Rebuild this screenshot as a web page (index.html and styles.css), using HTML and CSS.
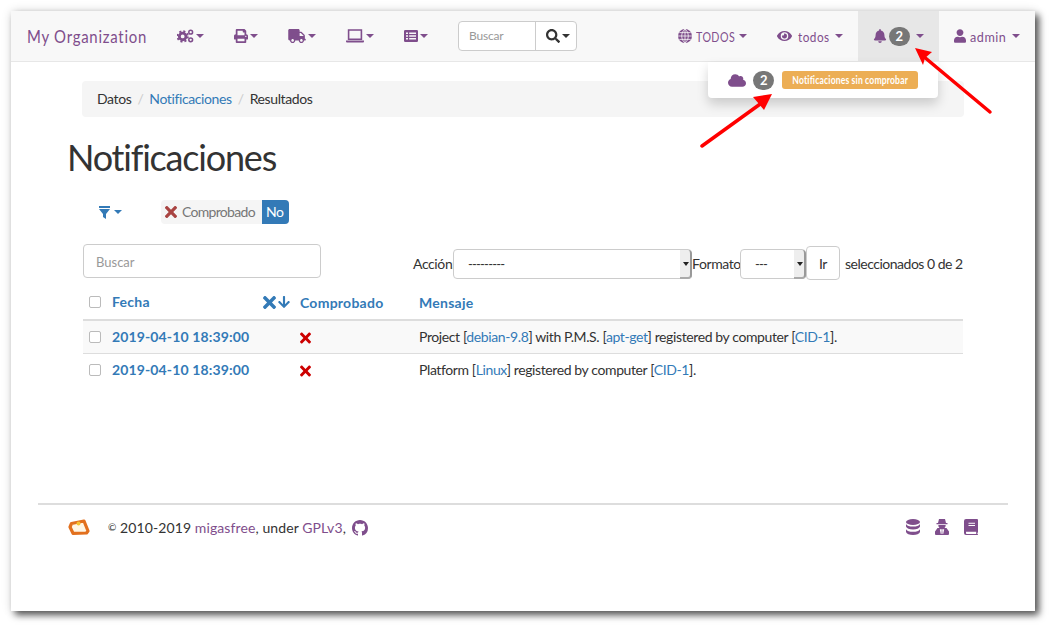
FILE: index.html
```html
<!doctype html>
<html lang="en">
<head>
  <meta charset="utf-8">
  <title>Notificaciones</title>
  <link rel="stylesheet" href="styles.css">
</head>
<body>

<svg class="defs" width="0" height="0">
  <symbol id="i-bell" viewBox="0 0 448 512"><path d="M224 512c35.32 0 63.97-28.65 63.97-64H160.03c0 35.35 28.65 64 63.97 64zm215.39-149.71c-19.32-20.76-55.47-51.99-55.47-154.29 0-77.7-54.48-139.9-127.94-155.16V32c0-17.67-14.32-32-31.98-32s-31.98 14.33-31.98 32v20.84C118.56 68.1 64.08 130.3 64.08 208c0 102.3-36.15 133.53-55.47 154.29-6 6.45-8.66 14.16-8.61 21.71.11 16.4 12.98 32 32.1 32h383.8c19.12 0 32-15.6 32.1-32 .05-7.55-2.61-15.27-8.61-21.71z"/></symbol>
  <symbol id="i-user" viewBox="0 0 448 512"><path d="M224 256c70.7 0 128-57.3 128-128S294.7 0 224 0 96 57.3 96 128s57.3 128 128 128zm89.6 32h-16.7c-22.2 10.2-46.9 16-72.9 16s-50.6-5.8-72.9-16h-16.7C60.2 288 0 348.2 0 422.4V464c0 26.5 21.5 48 48 48h352c26.5 0 48-21.5 48-48v-41.6c0-74.2-60.2-134.4-134.4-134.4z"/></symbol>
  <symbol id="i-cloud" viewBox="0 0 640 512"><path d="M537.6 226.6c4.1-10.7 6.4-22.4 6.4-34.6 0-53-43-96-96-96-19.7 0-38.1 6-53.3 16.2C367 64.2 315.3 32 256 32c-88.4 0-160 71.6-160 160 0 2.7.1 5.4.2 8.1C40.2 219.8 0 273.2 0 336c0 79.5 64.5 144 144 144h368c70.7 0 128-57.3 128-128 0-61.9-44-113.6-102.4-125.4z"/></symbol>
  <symbol id="i-eye" viewBox="0 0 576 512"><path d="M572.52 241.4C518.29 135.59 410.93 64 288 64S57.68 135.64 3.48 241.41a32.35 32.35 0 0 0 0 29.19C57.71 376.41 165.07 448 288 448s230.32-71.64 284.52-177.41a32.35 32.35 0 0 0 0-29.19zM288 400a144 144 0 1 1 144-144 143.93 143.93 0 0 1-144 144zm0-240a95.31 95.31 0 0 0-25.31 3.79 47.85 47.85 0 0 1-66.9 66.9A95.78 95.78 0 1 0 288 160z"/></symbol>
  <symbol id="i-search" viewBox="0 0 512 512"><path d="M505 442.7L405.3 343c-4.5-4.5-10.6-7-17-7H372c27.6-35.3 44-79.7 44-128C416 93.1 322.9 0 208 0S0 93.1 0 208s93.1 208 208 208c48.3 0 92.7-16.4 128-44v16.3c0 6.4 2.5 12.5 7 17l99.7 99.7c9.4 9.4 24.6 9.4 33.9 0l28.3-28.3c9.4-9.4 9.4-24.6.1-34zM208 336c-70.7 0-128-57.2-128-128 0-70.7 57.2-128 128-128 70.7 0 128 57.2 128 128 0 70.7-57.2 128-128 128z"/></symbol>
  <symbol id="i-times" viewBox="0 0 352 512"><path d="M242.72 256l100.07-100.07c12.28-12.28 12.28-32.19 0-44.48l-22.24-22.24c-12.28-12.28-32.19-12.28-44.48 0L176 189.28 75.93 89.21c-12.28-12.28-32.19-12.28-44.48 0L9.21 111.45c-12.28 12.28-12.28 32.19 0 44.48L109.28 256 9.21 356.07c-12.28 12.28-12.28 32.19 0 44.48l22.24 22.24c12.28 12.28 32.2 12.28 44.48 0L176 322.72l100.07 100.07c12.28 12.28 32.2 12.28 44.48 0l22.24-22.24c12.28-12.28 12.28-32.19 0-44.48L242.72 256z"/></symbol>
  <symbol id="i-down" viewBox="0 0 448 512"><path d="M413.1 222.5l22.2 22.2c9.4 9.4 9.4 24.6 0 33.9L241 473c-9.4 9.4-24.6 9.4-33.9 0L12.7 278.6c-9.4-9.4-9.4-24.6 0-33.9l22.2-22.2c9.5-9.5 25-9.3 34.3.4L184 343.4V56c0-13.3 10.7-24 24-24h32c13.3 0 24 10.7 24 24v287.4l114.8-120.5c9.3-9.8 24.8-10 34.3-.4z"/></symbol>
  <symbol id="i-truck" viewBox="0 0 640 512"><path d="M624 352h-16V243.9c0-12.7-5.1-24.9-14.1-33.9L494 110.1c-9-9-21.2-14.1-33.9-14.1H416V48c0-26.5-21.5-48-48-48H48C21.5 0 0 21.5 0 48v320c0 26.5 21.5 48 48 48h16c0 53 43 96 96 96s96-43 96-96h128c0 53 43 96 96 96s96-43 96-96h48c8.8 0 16-7.2 16-16v-32c0-8.8-7.2-16-16-16zM160 464c-26.5 0-48-21.5-48-48s21.5-48 48-48 48 21.5 48 48-21.5 48-48 48zm320 0c-26.5 0-48-21.5-48-48s21.5-48 48-48 48 21.5 48 48-21.5 48-48 48zm80-208H416V144h44.1l99.9 99.9V256z"/></symbol>
  <symbol id="i-print" viewBox="0 0 512 512"><path d="M448 192V77.25c0-8.49-3.37-16.62-9.37-22.63L393.37 9.37c-6-6-14.14-9.37-22.63-9.37H96C78.33 0 64 14.33 64 32v160c-35.35 0-64 28.65-64 64v112c0 8.84 7.16 16 16 16h48v96c0 17.67 14.33 32 32 32h320c17.67 0 32-14.33 32-32v-96h48c8.84 0 16-7.16 16-16V256c0-35.35-28.65-64-64-64zm-64 256H128v-96h256v96zm0-224H128V64h192v48c0 8.84 7.16 16 16 16h48v96zm48 72c-13.25 0-24-10.75-24-24 0-13.26 10.75-24 24-24s24 10.74 24 24c0 13.25-10.75 24-24 24z"/></symbol>
  <symbol id="i-github" viewBox="0 0 16 16"><path d="M8 0C3.58 0 0 3.58 0 8c0 3.54 2.29 6.53 5.47 7.59.4.07.55-.17.55-.38 0-.19-.01-.82-.01-1.49-2.01.37-2.53-.49-2.69-.94-.09-.23-.48-.94-.82-1.13-.28-.15-.68-.52-.01-.53.63-.01 1.08.58 1.23.82.72 1.21 1.87.87 2.33.66.07-.52.28-.87.51-1.07-1.78-.2-3.64-.89-3.64-3.95 0-.87.31-1.59.82-2.15-.08-.2-.36-1.02.08-2.12 0 0 .67-.21 2.2.82.64-.18 1.32-.27 2-.27.68 0 1.36.09 2 .27 1.53-1.04 2.2-.82 2.2-.82.44 1.1.16 1.92.08 2.12.51.56.82 1.27.82 2.15 0 3.07-1.87 3.75-3.65 3.95.29.25.54.73.54 1.48 0 1.07-.01 1.93-.01 2.2 0 .21.15.46.55.38A8.013 8.013 0 0016 8c0-4.42-3.58-8-8-8z"/></symbol>
  <symbol id="i-cogs" viewBox="0 0 18 14">
    <circle cx="6" cy="7.5" r="3.5" fill="none" stroke="currentColor" stroke-width="3"/>
    <circle cx="6" cy="7.500" r="5.500" fill="none" stroke="currentColor" stroke-width="2" stroke-dasharray="2.200 2.120"/>
    <circle cx="14.500" cy="3" r="2" fill="none" stroke="currentColor" stroke-width="1.600"/>
    <circle cx="14.500" cy="11" r="2" fill="none" stroke="currentColor" stroke-width="1.600"/>
  </symbol>
  <symbol id="i-laptop" viewBox="0 0 18 14">
    <path d="M2.600 1h12.800v9.200H2.600z" fill="none" stroke="currentColor" stroke-width="1.600"/>
    <path d="M0 11.400h18v1.200a1 1 0 0 1-1 1H1a1 1 0 0 1-1-1z"/>
  </symbol>
  <symbol id="i-list" viewBox="0 0 14 12">
    <path fill-rule="evenodd" d="M1.200 0h11.600A1.200 1.200 0 0 1 14 1.200v9.600a1.200 1.200 0 0 1-1.200 1.200H1.200A1.200 1.200 0 0 1 0 10.800V1.200A1.200 1.200 0 0 1 1.200 0zM2 2.600v1.500h2V2.600zm3.200 0v1.500H12V2.600zM2 5.300v1.500h2V5.300zm3.200 0v1.500H12V5.300zM2 8v1.500h2V8zm3.200 0v1.500H12V8z"/>
  </symbol>
  <symbol id="i-globe" viewBox="0 0 14 14">
    <circle cx="7" cy="7" r="7"/>
    <path d="M7 0v14M0 7h14M1.300 3.600h11.400M1.300 10.400h11.400M7 0C2.600 3.500 2.600 10.500 7 14M7 0c4.400 3.500 4.400 10.500 0 14" fill="none" stroke="#f8f8f8" stroke-width=".8"/>
  </symbol>
  <symbol id="i-database" viewBox="0 0 14 16">
    <ellipse cx="7" cy="3" rx="7" ry="3"/>
    <path d="M0 5c1 1.800 3.600 2.600 7 2.600S13 6.800 14 5v2.600c-.6 1.900-3.400 3-7 3S.6 9.500 0 7.600z"/>
    <path d="M0 10.200c1 1.800 3.600 2.600 7 2.600s6-.8 7-2.600V13c-.6 1.900-3.400 3-7 3s-6.400-1.100-7-3z"/>
  </symbol>
  <symbol id="i-secret" viewBox="0 0 14 16">
    <path d="M4 0h6l1 4h1.500v1.300h-11V4H3z"/>
    <path d="M3.300 6h7.400a3.700 3.700 0 0 1-7.400 0z"/>
    <path fill-rule="evenodd" d="M2.500 9h9L14 12.500V15a1 1 0 0 1-1 1H1a1 1 0 0 1-1-1v-2.500zM4.800 10.200l1 4.800h.7l.3-4.800zM7.200 10.200l.3 4.800h.7l1-4.800z"/>
  </symbol>
  <symbol id="i-book" viewBox="0 0 14 16">
    <path fill-rule="evenodd" d="M2 0h11a1 1 0 0 1 1 1v12a1 1 0 0 1-.6.9V15h.1a.5.5 0 0 1 0 1H2a2 2 0 0 1-2-2V2a2 2 0 0 1 2-2zM4.500 3.800v1h6.500v-1zM4.500 6v1h6.500V6zM2 12.800v1.500a.7.7 0 0 0 .7.7h9.500v-2.200z"/>
  </symbol>
</svg>

<div class="window">

  <nav class="navbar">
    <a class="brand" href="#"><span class="brand-text">My Organization</span></a>
    <a class="nav-item" href="#"><svg class="icon w-cogs"><use href="#i-cogs"/></svg><span class="caret"></span></a>
    <a class="nav-item" href="#"><svg class="icon"><use href="#i-print"/></svg><span class="caret"></span></a>
    <a class="nav-item" href="#"><svg class="icon w-truck"><use href="#i-truck"/></svg><span class="caret"></span></a>
    <a class="nav-item" href="#"><svg class="icon w-truck"><use href="#i-laptop"/></svg><span class="caret"></span></a>
    <a class="nav-item" href="#"><svg class="icon"><use href="#i-list"/></svg><span class="caret"></span></a>

    <form class="nav-search">
      <span class="nav-search-text">Buscar</span>
      <span class="nav-search-btn"><svg class="icon"><use href="#i-search"/></svg><span class="caret"></span></span>
    </form>

    <div class="nav-right">
      <a class="nav-item" href="#"><svg class="icon nav-icon"><use href="#i-globe"/></svg><span class="nav-text t-all">TODOS</span><span class="caret caret-gap"></span></a>
      <a class="nav-item" href="#"><svg class="icon nav-icon w-eye"><use href="#i-eye"/></svg><span class="nav-text t-todos">todos</span><span class="caret caret-gap"></span></a>
      <a class="nav-item active" href="#"><svg class="icon"><use href="#i-bell"/></svg><span class="badge">2</span><span class="caret caret-gap"></span></a>
      <a class="nav-item" href="#"><svg class="icon nav-icon w-user"><use href="#i-user"/></svg><span class="nav-text t-admin">admin</span><span class="caret caret-gap"></span></a>
    </div>
  </nav>

  <div class="dropdown">
    <svg class="icon w-cloud"><use href="#i-cloud"/></svg>
    <span class="badge">2</span>
    <span class="label"><span class="label-text">Notificaciones sin comprobar</span></span>
  </div>

  <div class="content">
    <ol class="breadcrumb">
      <li>Datos</li>
      <li><a href="#">Notificaciones</a></li>
      <li>Resultados</li>
    </ol>

    <h1>Notificaciones</h1>

    <div class="filters">
      <a class="filter-toggle" href="#">
        <svg class="filter-icon" viewBox="0 0 11 13"><path d="M0 0h11v2H0zM0 3h11L7 8v5L4 11V8z"/></svg>
        <span class="caret"></span>
      </a>
      <span class="chip">
        <span class="chip-name"><svg class="icon chip-x"><use href="#i-times"/></svg>Comprobado</span><span class="chip-value">No</span>
      </span>
    </div>

    <div class="toolbar">
      <input class="search" type="text" placeholder="Buscar">
      <div class="actions">
        <span class="action-label">Acción:</span>
        <span class="select select-action"><select><option>---------</option></select></span>
        <span class="format-label">Formato</span>
        <span class="select select-format"><select><option>---</option></select></span>
        <button class="go" type="button">Ir</button>
        <span class="counter">seleccionados 0 de 2</span>
      </div>
    </div>

    <table class="results">
      <thead>
        <tr>
          <th class="col-check"><span class="check"></span></th>
          <th class="col-date">
            <span class="sort"><svg class="icon sort-x"><use href="#i-times"/></svg><svg class="icon sort-down"><use href="#i-down"/></svg></span>
            <a href="#">Fecha</a>
          </th>
          <th class="col-state"><a href="#">Comprobado</a></th>
          <th><a href="#">Mensaje</a></th>
        </tr>
      </thead>
      <tbody>
        <tr>
          <td class="col-check"><span class="check"></span></td>
          <td class="col-date"><a href="#">2019-04-10 18:39:00</a></td>
          <td class="col-state"><svg class="icon no"><use href="#i-times"/></svg></td>
          <td>Project [<a href="#">debian-9.8</a>] with P.M.S. [<a href="#">apt-get</a>] registered by computer [<a href="#">CID-1</a>].</td>
        </tr>
        <tr>
          <td class="col-check"><span class="check"></span></td>
          <td class="col-date"><a href="#">2019-04-10 18:39:00</a></td>
          <td class="col-state"><svg class="icon no"><use href="#i-times"/></svg></td>
          <td>Platform [<a href="#">Linux</a>] registered by computer [<a href="#">CID-1</a>].</td>
        </tr>
      </tbody>
    </table>
  </div>

  <footer class="footer">
    <svg class="logo" viewBox="0 0 24 18">
      <path d="M3.500 4.500L16 2 20 12 18.500 14 5 14.300 2 8z" fill="#fff6e4" stroke="#e2701e" stroke-width="3.200" stroke-linejoin="round"/>
      <circle cx="10.500" cy="4.500" r="2" fill="#f5c230"/>
    </svg>
    <p class="copy"><span class="copy-mark">©</span> 2010-2019 <a href="#">migasfree</a>, under <a href="#">GPLv3</a>, <a href="#"><svg class="icon"><use href="#i-github"/></svg></a></p>
    <div class="footer-icons">
      <a href="#"><svg class="icon"><use href="#i-database"/></svg></a>
      <a href="#"><svg class="icon"><use href="#i-secret"/></svg></a>
      <a href="#"><svg class="icon"><use href="#i-book"/></svg></a>
    </div>
  </footer>

  <svg class="arrows" viewBox="0 0 1024 600">
    <g stroke="#f00" stroke-width="3.500" stroke-linecap="round" fill="none">
      <path d="M979 101L912 45"/>
      <path d="M691 135L752 91"/>
    </g>
    <path d="M904 37L921 41 914 47 912 54z" fill="#f00"/>
    <path d="M761 83L742 86 748 93 753 99z" fill="#f00"/>
  </svg>

</div>

</body>
</html>
```

FILE: styles.css
```css
html {
  box-sizing: border-box;
}
*, *:before, *:after {
  box-sizing: inherit;
}

body {
  margin: 0;
  padding: 11px 19px 19px 11px;
  background: #fff;
  font-family: 'Lato', sans-serif;
  font-size: 14px;
  letter-spacing: -.39px;
  color: #333;
}

a {
  color: #337ab7;
  text-decoration: none;
}

.defs {
  position: absolute;
}

.icon {
  width: 14px;
  height: 14px;
  fill: currentColor;
  vertical-align: -2px;
}
.w-cogs { width: 17px; }
.w-truck { width: 18px; }
.w-user { width: 12px; }
.w-cloud { width: 18px; height: 15px; }

.window {
  position: relative;
  width: 1024px;
  height: 600px;
  background: #fff;
  box-shadow: 4px 4px 7px rgba(0, 0, 0, .65), 0 0 10px rgba(0, 0, 0, .12);
}

/* navbar */
.navbar {
  display: flex;
  align-items: center;
  height: 51px;
  padding-left: 16px;
  background: #f8f8f8;
  border-bottom: 1px solid #e7e7e7;
  letter-spacing: .6px;
}
.navbar a {
  color: #7f4e8c;
}
.brand {
  flex: none;
  width: 135px;
  font-size: 18px;
  white-space: nowrap;
}
.brand-text {
  display: inline-block;
  letter-spacing: .9px;
  transform: scaleX(.83);
  transform-origin: 0 50%;
}
.nav-item {
  display: flex;
  flex: none;
  align-items: center;
  height: 50px;
  padding: 0 15px;
  font-size: 14px;
  white-space: nowrap;
}
.nav-item.active {
  background: #e7e7e7;
}
.nav-icon {
  margin-right: 4px;
}
.nav-icon.w-eye {
  width: 15px;
  margin-right: 6px;
}
/* the original nav font is a narrow one, no such family here */
.nav-text {
  flex: none;
  transform-origin: 0 50%;
}
.t-all { width: 37px; transform: scaleX(.76); }
.t-todos { width: 31px; transform: scaleX(.84); }
.t-admin { width: 36px; transform: scaleX(.9); }
.caret {
  display: inline-block;
  margin-left: 2px;
  border-top: 4px solid;
  border-left: 4px solid transparent;
  border-right: 4px solid transparent;
}
.caret-gap {
  margin-left: 6px;
}
.nav-search {
  display: flex;
  flex: none;
  width: 119px;
  height: 30px;
  margin-left: 15px;
  border: 1px solid #ccc;
  border-radius: 4px;
  background: #fff;
  font-size: 12px;
  letter-spacing: -.2px;
  color: #999;
}
.nav-search-text {
  width: 77px;
  padding-left: 10px;
  line-height: 28px;
  border-right: 1px solid #ccc;
}
.nav-search-btn {
  display: flex;
  align-items: center;
  width: 40px;
  padding-left: 10px;
  color: #333;
}
.nav-right {
  display: flex;
  margin-left: auto;
}
.badge {
  display: inline-block;
  width: 21px;
  margin-left: 2px;
  padding: 3px 0;
  border-radius: 10px;
  background: #777;
  color: #fff;
  font-size: 13px;
  font-weight: bold;
  line-height: 13px;
  text-align: center;
}

/* notifications menu */
.dropdown {
  position: absolute;
  top: 51px;
  left: 697px;
  display: flex;
  align-items: center;
  width: 230px;
  height: 36px;
  padding-left: 20px;
  background: #fff;
  border-radius: 0 0 4px 4px;
  box-shadow: 0 6px 12px rgba(0, 0, 0, .175);
  color: #7f4e8c;
}
.dropdown .badge {
  margin-left: 7px;
}
.label {
  display: flex;
  justify-content: center;
  width: 136px;
  margin-left: 8px;
  border-radius: 3px;
  background: #ecae55;
  color: #fff;
  font-size: 11px;
  font-weight: bold;
  line-height: 18px;
  white-space: nowrap;
}
.label-text {
  flex: none;
  letter-spacing: .2px;
  transform: scaleX(.78);
}

/* content */
.content {
  padding: 19px 71px 0;
}
.breadcrumb {
  display: flex;
  height: 36px;
  margin: 0;
  padding: 0 15px 2px;
  align-items: center;
  list-style: none;
  background: #f5f5f5;
  border-radius: 4px;
}
.breadcrumb li + li:before {
  content: "/";
  padding: 0 6px;
  color: #ccc;
}
h1 {
  margin: 20px 0 0 -15px;
  font-size: 36px;
  font-weight: 400;
  line-height: 40px;
  letter-spacing: -1.2px;
}
.filters {
  display: flex;
  align-items: center;
  height: 24px;
  margin-top: 23px;
}
.filter-toggle {
  display: flex;
  align-items: center;
  width: 79px;
  padding-left: 17px;
}
.filter-icon {
  width: 11px;
  height: 13px;
  fill: currentColor;
}
.filter-toggle .caret {
  margin-left: 4px;
}
.chip {
  display: flex;
  height: 24px;
  border-radius: 4px;
  background: #f5f5f5;
  overflow: hidden;
  line-height: 24px;
}
.chip-name {
  padding: 0 7px 0 4px;
  letter-spacing: -.69px;
  color: #777;
}
.chip-x {
  width: 12px;
  height: 18px;
  margin-right: 5px;
  vertical-align: -4px;
  color: #a94442;
}
.chip-value {
  padding: 0 5px 0 4px;
  background: #337ab7;
  color: #fff;
}
.toolbar {
  display: flex;
  align-items: flex-start;
  margin: 20px 0 0 1px;
}
.search {
  flex: none;
  width: 238px;
  height: 34px;
  padding: 1px 12px 0;
  border: 1px solid #ccc;
  border-radius: 4px;
  font: inherit;
  font-size: 13px;
}
.search::placeholder {
  color: #999;
}
.actions {
  display: flex;
  align-items: center;
  flex: 1;
  height: 34px;
  margin: 2px 0 0 92px;
}
.action-label {
  flex: none;
  width: 40px;
  white-space: nowrap;
}
.format-label {
  flex: none;
  width: 48px;
  white-space: nowrap;
}
.select {
  position: relative;
  display: block;
  flex: none;
  height: 30px;
  margin-top: 1px;
}
.select:before {
  content: "";
  position: absolute;
  top: 1px;
  right: 0;
  bottom: 0;
  width: 12px;
  background: #eee;
  border-right: 2px solid #999;
  border-bottom: 2px solid #aaa;
  border-radius: 0 4px 4px 0;
}
.select:after {
  content: "";
  position: absolute;
  top: 13px;
  right: 3px;
  border-top: 4px solid #222;
  border-left: 3px solid transparent;
  border-right: 3px solid transparent;
}
.select select {
  display: block;
  width: 100%;
  height: 30px;
  padding: 0 14px 0 14px;
  border: 1px solid #ccc;
  border-radius: 4px;
  background: #fff;
  font: inherit;
  font-size: 13px;
  letter-spacing: -.8px;
  color: #333;
  appearance: none;
}
.select-action { width: 239px; }
.select-format { width: 66px; }
.go {
  flex: none;
  width: 34px;
  height: 34px;
  padding: 0;
  border: 1px solid #ccc;
  border-radius: 4px;
  background: #fff;
  font: inherit;
  letter-spacing: inherit;
  color: #333;
}
.counter {
  margin-left: 5px;
  letter-spacing: -.49px;
  white-space: nowrap;
}

/* table */
.results {
  width: 880px;
  margin: 4px 0 0 1px;
  border-collapse: collapse;
  table-layout: fixed;
}
.results th {
  height: 36px;
  padding: 1px 6px 0;
  border-bottom: 2px solid #ddd;
  text-align: left;
  font-weight: bold;
  letter-spacing: .25px;
}
.results td {
  height: 33px;
  padding: 0 6px;
  border-bottom: 1px solid #ddd;
}
.results tbody tr:nth-child(odd) {
  background: #f9f9f9;
}
.results tbody tr:last-child td {
  border-bottom: 0;
}
.col-check { width: 23px; }
.col-date { width: 188px; }
.col-state { width: 119px; }
.results td.col-date {
  font-weight: bold;
  letter-spacing: .13px;
}
.check {
  display: block;
  width: 12px;
  height: 12px;
  border: 1px solid #bbb;
  border-radius: 2px;
  background: #fff;
}
.sort {
  float: right;
  margin-right: -2px;
  color: #337ab7;
}
.sort-x {
  width: 13px;
  height: 19px;
  vertical-align: -5px;
}
.sort-down {
  width: 12px;
  height: 14px;
  margin-left: 2px;
  vertical-align: -2px;
}
.no {
  width: 11px;
  height: 16px;
  vertical-align: -4px;
  color: #c00;
}

/* footer */
.footer {
  position: absolute;
  left: 27px;
  right: 27px;
  bottom: 0;
  display: flex;
  height: 108px;
  padding: 14px 30px 0;
  border-top: 2px solid #ddd;
}
.logo {
  width: 24px;
  height: 18px;
  margin-right: 16px;
}
.copy {
  margin: 0;
  letter-spacing: .1px;
}
.copy a {
  color: #7f4e8c;
}
.copy .icon {
  width: 16px;
  height: 16px;
  margin-left: 2px;
  vertical-align: -3px;
}
.copy-mark {
  font-size: 10px;
  vertical-align: 2px;
}
.footer-icons {
  display: flex;
  gap: 15px;
  margin-left: auto;
}
.footer-icons a {
  color: #7f4e8c;
}
.footer-icons .icon {
  width: 14px;
  height: 16px;
}

/* the red pointers pasted on the screenshot */
.arrows {
  position: absolute;
  top: 0;
  left: 0;
  width: 1024px;
  height: 600px;
  pointer-events: none;
}
```
